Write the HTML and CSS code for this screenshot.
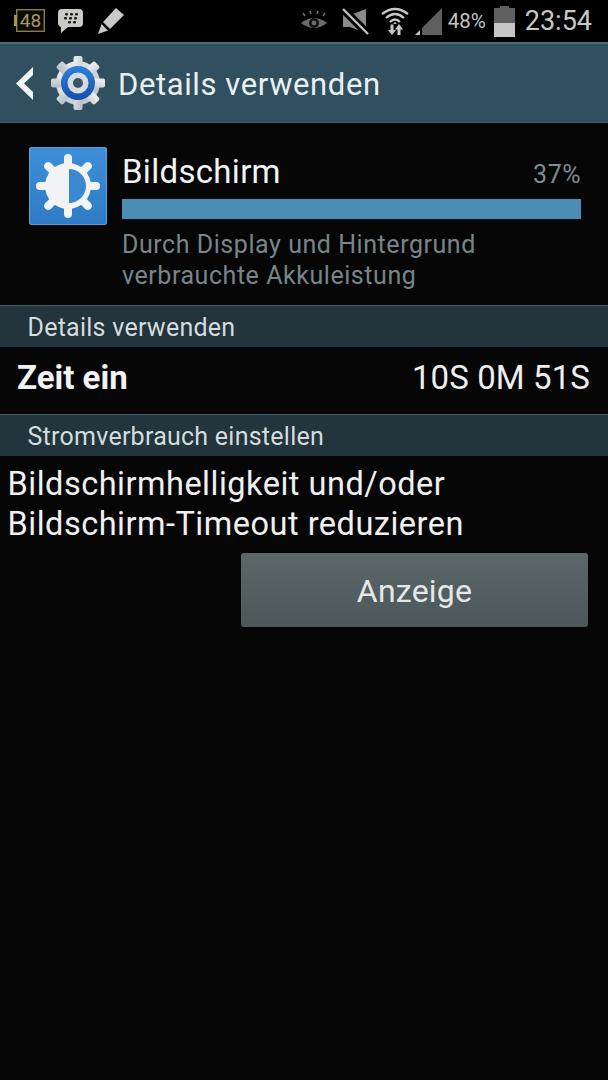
FILE: index.html
```html
<!DOCTYPE html>
<html lang="de">
<head>
<meta charset="utf-8">
<title>Details verwenden</title>
<link rel="stylesheet" href="styles.css">
</head>
<body>
<div class="screen">
  <header class="status">
    <div class="status-left">
      <svg class="ic" width="31" height="23" viewBox="0 0 31 23"><rect x="2.700" y="0.700" width="27.600" height="21.600" fill="#0c0a02" stroke="#8a7a4c" stroke-width="1.400"/><rect x="0" y="6" width="3" height="11" fill="#a8934f"/><text x="16.500" y="18" text-anchor="middle" class="t48">48</text></svg>
      <svg class="ic bb" width="25" height="24" viewBox="0 0 25 24"><path d="M4 0H21Q25 0 25 4V14Q25 18 21 18H10L3 24V18Q0 17 0 14V4Q0 0 4 0Z" fill="#c9c9c6"/><g fill="#1a1a1a"><rect x="7" y="4" width="3" height="2.400" rx="1"/><rect x="12" y="4" width="3" height="2.400" rx="1"/><rect x="17" y="4" width="3" height="2.400" rx="1"/><rect x="6" y="8" width="3" height="2.400" rx="1"/><rect x="11" y="8" width="3" height="2.400" rx="1"/><rect x="16" y="8" width="3" height="2.400" rx="1"/><rect x="10" y="12" width="3" height="2.400" rx="1"/><rect x="15" y="12" width="3" height="2.400" rx="1"/></g></svg>
      <svg class="ic pencil" width="26" height="26" viewBox="0 0 26 26"><path d="M18 0L26 7L12 21L5 14Z" fill="#c9c9c6"/><path d="M3.500 16L10 22.500L0 26Z" fill="#c9c9c6"/></svg>
    </div>
    <div class="status-right">
      <svg class="ic" width="28" height="22" viewBox="0 0 28 22"><path d="M1 13Q14 3 27 13Q14 23 1 13Z" fill="#6c6c6c"/><circle cx="14" cy="13" r="5" fill="#111"/><circle cx="14" cy="13" r="2.400" fill="#6c6c6c"/><path d="M5 6L3 3M11 4L10 1M17 4L18 1M23 6L25 3" stroke="#6c6c6c" stroke-width="1.600"/></svg>
      <svg class="ic m-mute" width="27" height="27" viewBox="0 0 27 27"><path d="M1 7H8L24 1V25L8 19H1Z" fill="#8a8a8a"/><path d="M0 0L27 27" stroke="#000" stroke-width="8"/><path d="M1 1L26 26" stroke="#bdbdbd" stroke-width="2.400"/></svg>
      <svg class="ic m-wifi" width="28" height="28" viewBox="0 0 28 28"><g fill="none" stroke="#c8c8c8" stroke-width="2.300"><path d="M1 7Q14 -3 27 7"/><path d="M5 11Q14 3 23 11"/><path d="M9 15Q14 10 19 15"/></g><path d="M12 17L14 15L16 17Z" fill="#c8c8c8"/><path d="M9.500 17.500H12.500V23H15L11 28L7 23H9.500Z" fill="#c8c8c8"/><path d="M16.500 28H19.500V22.500H22L18 17L14 22.500H16.500Z" fill="#c8c8c8"/></svg>
      <svg class="ic m-signal" width="27" height="27" viewBox="0 0 27 27"><path d="M27 0V27H7V20Z" fill="#5f5f5f"/><path d="M0 27L5 22V27Z" fill="#c4c4c4"/></svg>
      <span class="batt-text">48%</span>
      <svg class="ic m-batt" width="21" height="31" viewBox="0 0 21 31"><path d="M6 0H15V2H21V17H0V2H6Z" fill="#5f5f5f"/><rect y="17" width="21" height="14" fill="#c6c6c6"/></svg>
      <span class="clock">23:54</span>
    </div>
  </header>

  <div class="actionbar">
    <svg class="back" width="18" height="33" viewBox="0 0 18 33"><path d="M17 0L0 16.500L17 33V25L8 16.500L17 8Z" fill="#f2f4f4"/></svg>
    <svg class="gear" width="54" height="54" viewBox="0 0 54 54">
      <defs>
        <linearGradient id="gearfill" x1="0" y1="0" x2="1" y2="1"><stop offset="0" stop-color="#f2f2f2"/><stop offset="1" stop-color="#b5bcc0"/></linearGradient>
        <linearGradient id="ringfill" x1="0" y1="0" x2="0" y2="1"><stop offset="0" stop-color="#2f80dc"/><stop offset="1" stop-color="#1450a8"/></linearGradient>
      </defs>
      <circle cx="27" cy="27" r="22" fill="url(#gearfill)"/>
      <g fill="url(#gearfill)">
        <rect x="22.500" y="0" width="9" height="54" rx="2"/>
        <rect x="22.500" y="0" width="9" height="54" rx="2" transform="rotate(45 27 27)"/>
        <rect x="22.500" y="0" width="9" height="54" rx="2" transform="rotate(90 27 27)"/>
        <rect x="22.500" y="0" width="9" height="54" rx="2" transform="rotate(135 27 27)"/>
      </g>
      <circle cx="27" cy="27" r="17" fill="url(#ringfill)"/>
      <circle cx="27" cy="27" r="10.500" fill="#d3dbe2"/>
      <circle cx="27" cy="27" r="5" fill="#3a5566"/>
    </svg>
    <h1 class="title">Details verwenden</h1>
  </div>

  <section class="summary">
    <div class="app-icon">
      <svg width="68" height="68" viewBox="0 0 68 68">
        <g fill="#f1f3f4">
          <rect x="30" y="2" width="8" height="64" rx="4"/>
          <rect x="30" y="2" width="8" height="64" rx="4" transform="rotate(45 34 34)"/>
          <rect x="30" y="2" width="8" height="64" rx="4" transform="rotate(90 34 34)"/>
          <rect x="30" y="2" width="8" height="64" rx="4" transform="rotate(135 34 34)"/>
          <circle cx="34" cy="34" r="23"/>
        </g>
        <path d="M35 17A17 17 0 0 1 35 51Z" fill="#3a88d2"/>
      </svg>
    </div>
    <div class="summary-body">
      <div class="summary-head">
        <span class="app-name">Bildschirm</span>
        <span class="percent">37%</span>
      </div>
      <div class="bar"></div>
      <p class="desc">Durch Display und Hintergrund<br>verbrauchte Akkuleistung</p>
    </div>
  </section>

  <div class="section-head">Details verwenden</div>
  <div class="row">
    <span class="row-label">Zeit ein</span>
    <span class="row-value">10S 0M 51S</span>
  </div>
  <div class="section-head">Stromverbrauch einstellen</div>
  <p class="advice">Bildschirmhelligkeit und/oder<br>Bildschirm-Timeout reduzieren</p>
  <div class="actions"><button class="btn">Anzeige</button></div>
</div>
</body>
</html>
```
FILE: styles.css
```css
* { box-sizing: border-box; }
html, body { margin: 0; padding: 0; background: #050505; }
.screen {
  width: 608px;
  height: 1080px;
  overflow: hidden;
  background: #060606;
  font-family: Roboto, "Liberation Sans", sans-serif;
  color: #f0f2f2;
}
.status {
  height: 42px;
  background: #000;
  display: flex;
  justify-content: space-between;
  align-items: center;
  padding: 0 16px 0 14px;
}
.status-left { display: flex; align-items: center; padding-bottom: 1px; }
.bb { margin-left: 13px; }
.pencil { margin-left: 15px; }
.status-right { display: flex; align-items: center; }
.ic { display: block; flex: none; }
.t48 { font: 19px Roboto, sans-serif; fill: #a8986a; }
.m-mute { margin-left: 14px; }
.m-wifi { margin-left: 12px; }
.m-signal { margin-left: 6px; }
.batt-text { font-size: 20.500px; color: #c4c4c4; margin-left: 6px; }
.m-batt { margin-left: 8px; }
.clock { font-size: 27px; color: #c8c8c8; margin-left: 10px; }
.actionbar {
  height: 81px;
  background: #30505f;
  border-top: 2px solid #4d6a78;
  border-bottom: 1px solid #3d5a69;
  display: flex;
  align-items: center;
  padding-left: 16px;
}
.back { flex: none; }
.gear { flex: none; margin-left: 17px; }
.title { margin: 2px 0 0 13px; font-size: 31px; font-weight: 400; color: #eaf0f2; letter-spacing: 0.6px; }
.summary {
  height: 182px;
  display: flex;
  padding: 24px 27px 0 29px;
}
.app-icon {
  width: 78px;
  height: 78px;
  flex: none;
  border-radius: 3px;
  background: linear-gradient(#3d8fd8, #2f7bc6);
  box-shadow: inset 0 0 0 1px #5a9fdc;
  display: flex;
  align-items: center;
  justify-content: center;
}
.summary-body { margin-left: 15px; flex: 1; min-width: 0; }
.summary-head {
  display: flex;
  justify-content: space-between;
  align-items: baseline;
  height: 52px;
  line-height: 50px;
}
.app-name { font-size: 33px; color: #f2f4f4; letter-spacing: 0.3px; }
.percent { font-size: 25px; color: #7f8c90; letter-spacing: 0.5px; }
.bar { height: 20px; background: #4a8db5; }
.desc { margin: 10px 0 0; font-size: 25px; line-height: 31px; letter-spacing: 0.55px; color: #78858a; }
.section-head {
  height: 42px;
  background: #22343c;
  border-top: 1px solid #4a5f68;
  padding: 1px 0 0 27.500px;
  font-size: 25px;
  letter-spacing: 0.25px;
  line-height: 42px;
  color: #d4dcde;
}
.row {
  height: 67px;
  display: flex;
  justify-content: space-between;
  align-items: center;
  padding: 0 18px 6px 17px;
}
.row-label { font-size: 33px; font-weight: 700; color: #f2f2f2; }
.row-value { font-size: 33px; letter-spacing: 0.1px; color: #eeeeee; }
.advice { margin: 8px 0 0 7.500px; font-size: 32.500px; letter-spacing: 0.5px; line-height: 40px; color: #f0f0f0; }
.actions { display: flex; justify-content: flex-end; padding: 9px 20px 0 0; }
.btn {
  width: 347px;
  height: 74px;
  border: 0;
  border-radius: 3px;
  padding-top: 3px;
  background: linear-gradient(#5c676a, #4c5759);
  font-family: inherit;
  font-size: 32px;
  letter-spacing: 0.2px;
  color: #e4e8e8;
}
```
